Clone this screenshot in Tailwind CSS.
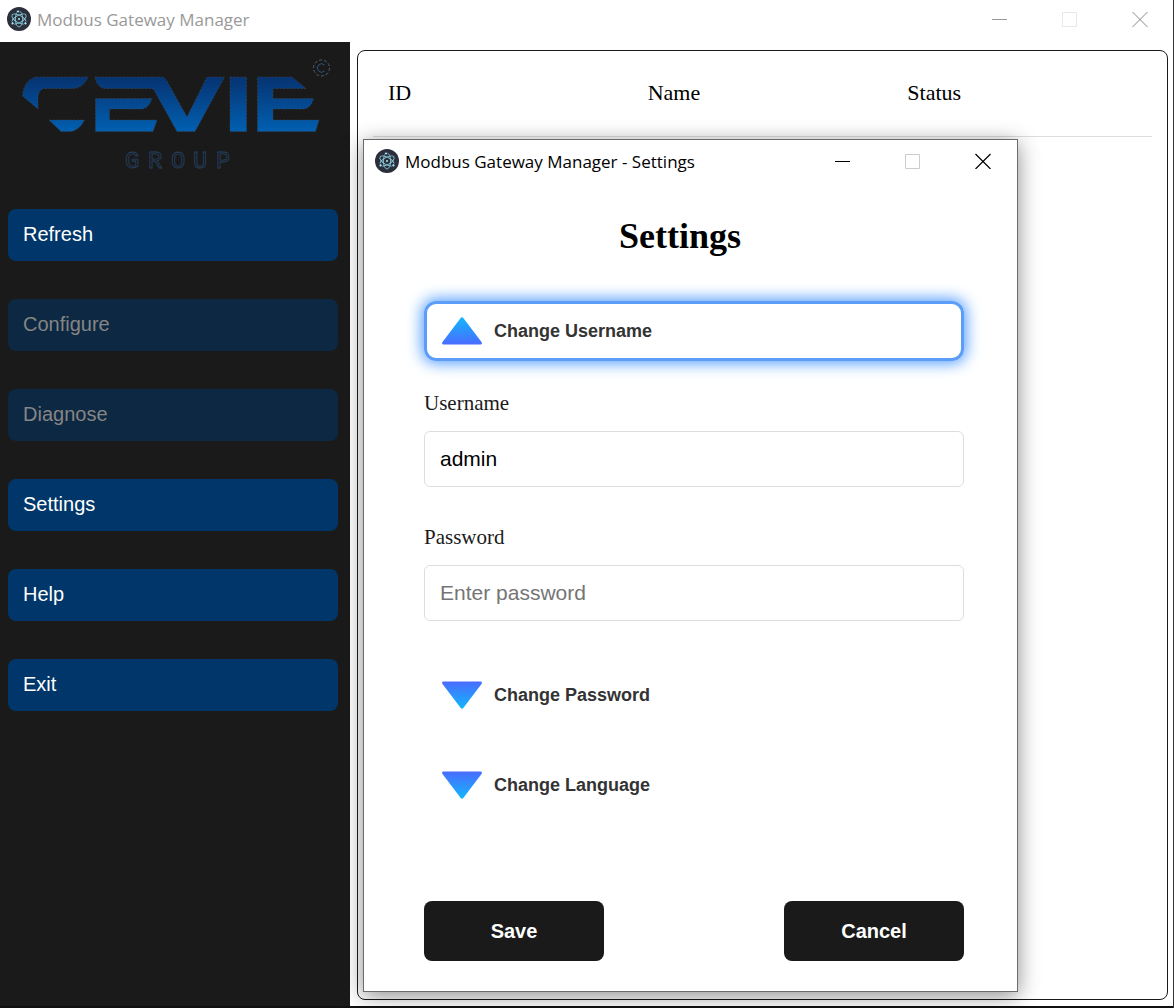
<!DOCTYPE html>
<html lang="en">
<head>
<meta charset="utf-8">
<title>Modbus Gateway Manager</title>
<script src="https://cdn.jsdelivr.net/npm/@tailwindcss/browser@4"></script>
</head>
<body class="relative flex h-screen flex-col overflow-hidden border-r border-[#333] bg-white font-['Liberation_Sans',Arial,sans-serif]">

<!-- Shared symbols -->
<svg class="absolute size-0" aria-hidden="true">
  <defs>
    <linearGradient id="up" x1="0" y1="0" x2="0" y2="1"><stop offset="0" stop-color="#12b6fd"/><stop offset="1" stop-color="#4a6cff"/></linearGradient>
    <symbol id="electron" viewBox="0 0 24 24">
      <circle cx="12" cy="12" r="12" fill="#2b2e3b"/>
      <g fill="none" stroke="#9feaf9" stroke-width="0.9" opacity=".8">
        <ellipse cx="12" cy="12" rx="3.600" ry="8" />
        <ellipse cx="12" cy="12" rx="3.600" ry="8" transform="rotate(60 12 12)"/>
        <ellipse cx="12" cy="12" rx="3.600" ry="8" transform="rotate(-60 12 12)"/>
      </g>
      <g fill="#9feaf9" stroke="#2b2e3b" stroke-width="1"><circle cx="11" cy="4.500" r="1.600"/><circle cx="5.600" cy="16.300" r="1.600"/><circle cx="18.400" cy="16.300" r="1.600"/></g>
      <circle cx="12" cy="12" r="1" fill="#9feaf9"/>
    </symbol>
    <symbol id="arrow-up" viewBox="0 0 40 28">
      <path d="M18.500 1.200Q20-.6 21.500 1.200L39.500 25Q40.700 27.500 38.500 27.500H1.500Q-.7 27.500.5 25Z" fill="url(#up)"/>
    </symbol>
  </defs>
</svg>

<header class="flex h-[42px] shrink-0 items-start justify-between pr-[25px] pl-[7px]">
  <div class="flex h-[38px] items-center gap-[6px]">
    <svg class="size-6"><use href="#electron"/></svg>
    <span class="pt-[2px] font-['Open_Sans',sans-serif] text-[17px] leading-6 text-[#999]">Modbus Gateway Manager</span>
  </div>
  <div class="flex h-[37px] items-center gap-[54px]">
    <button aria-label="Minimize"><svg class="block h-4 w-4" viewBox="0 0 16 16"><path d="M0 8.500H15" stroke="#999"/></svg></button>
    <button aria-label="Maximize" disabled><svg class="block h-4 w-4" viewBox="0 0 16 16"><path d="M.5 1.500h14v14H.5z" fill="none" stroke="#e8e8e8"/></svg></button>
    <button aria-label="Close"><svg class="block h-4 w-4" viewBox="0 0 16 16"><path d="M.5 1l15 15M15.500 1l-15 15" stroke="#888" stroke-width="1"/></svg></button>
  </div>
</header>

<main class="flex min-h-0 flex-1 border-b-2 border-[#111]">
  <aside class="w-[350px] shrink-0 bg-[#1a1a1a]">
    <svg class="block h-[167px] w-[350px]" viewBox="0 42 350 167" role="img" aria-label="Cevie Group">
      <defs><linearGradient id="brand" gradientUnits="userSpaceOnUse" x1="0" y1="77" x2="0" y2="132"><stop offset="0" stop-color="#063371"/><stop offset="1" stop-color="#0160b2"/></linearGradient></defs>
      <g fill="url(#brand)" stroke="#3a4654" stroke-width=".6" stroke-dasharray="2 1.500">
        <path d="M36 77H88Q84 87 74 88.500H44Q38 90 38 98V109L22.500 96Q24 80 36 77Z"/>
        <path d="M49 120H84.500Q79 131 70 131.500H61Z"/>
        <path d="M95 77H163Q166 79 168 83L187 117L207 77H224.500L195 131.500H177L154 90Q153 88.500 151 88.500H104Q96 86 95 77Z"/>
        <path d="M95.500 98.500H152Q149 108 142 109H109.500V120H157L153 131.500H95.500Z"/>
        <path d="M230 77H246.500V131.500H230Z"/>
        <path d="M257.500 77H292L306 88.500H273V98.500H313.500Q311 108 304 109H273V120H319L315.500 131.500H257.500Z"/>
      </g>
      <circle cx="321.500" cy="68" r="8" fill="none" stroke="#59616b" stroke-dasharray="3 2"/>
      <path d="M324.500 65A4.200 4.200 0 1 0 324.500 71" fill="none" stroke="#2b5580"/>
      <text x="125 148 171 193 216" y="168" font-family="Liberation Mono, monospace" font-size="24" fill="#1a1a1a" stroke="#264265" stroke-width=".8">GROUP</text>
    </svg>
    <nav class="flex flex-col gap-[38px] pr-3 pl-2 text-[20px] leading-6 text-white">
      <button class="h-[52px] rounded-lg bg-[#003669] px-[15px] pb-[2px] text-left">Refresh</button>
      <button class="h-[52px] rounded-lg bg-[#0d2842] px-[15px] pb-[2px] text-left text-[#858585]" disabled>Configure</button>
      <button class="h-[52px] rounded-lg bg-[#0d2842] px-[15px] pb-[2px] text-left text-[#858585]" disabled>Diagnose</button>
      <button class="h-[52px] rounded-lg bg-[#003669] px-[15px] pb-[2px] text-left">Settings</button>
      <button class="h-[52px] rounded-lg bg-[#003669] px-[15px] pb-[2px] text-left">Help</button>
      <button class="h-[52px] rounded-lg bg-[#003669] px-[15px] pb-[2px] text-left">Exit</button>
    </nav>
  </aside>

  <section class="mt-2 mr-[5px] mb-[6px] ml-[7px] flex-1 rounded-lg border border-[#1a1a1a] px-[15px]">
    <table class="w-full table-fixed font-['Liberation_Serif',serif] text-[22px] text-black">
      <thead>
        <tr class="h-[85px] border-b border-[#ddd] text-left">
          <th class="px-[15px] pb-[2px] font-normal">ID</th>
          <th class="px-[15px] pb-[2px] font-normal">Name</th>
          <th class="px-[15px] pb-[2px] font-normal">Status</th>
        </tr>
      </thead>
    </table>
  </section>
</main>

<!-- Settings window floating above the main one -->
<div role="dialog" aria-labelledby="dialog-title" class="absolute top-[139px] left-[363px] w-[655px] border border-[#6b6b6b] bg-white shadow-[0_4px_20px_rgba(0,0,0,0.45)]">
  <div class="flex h-[42px] items-center justify-between pr-[26px] pl-[11px]">
    <div class="flex items-center gap-[6px]">
      <svg class="size-6"><use href="#electron"/></svg>
      <span id="dialog-title" class="pt-[2px] font-['Open_Sans',sans-serif] text-[17px] leading-6 text-black">Modbus Gateway Manager - Settings</span>
    </div>
    <div class="flex items-center gap-[54px] pb-px">
      <button aria-label="Minimize"><svg class="block h-4 w-4" viewBox="0 0 16 16"><path d="M0 8.500H15" stroke="#000"/></svg></button>
      <button aria-label="Maximize" disabled><svg class="block h-4 w-4" viewBox="0 0 16 16"><path d="M.5 1.500h14v14H.5z" fill="none" stroke="#ccc"/></svg></button>
      <button aria-label="Close"><svg class="block h-4 w-4" viewBox="0 0 16 16"><path d="M.5 1l15 15M15.500 1l-15 15" stroke="#000" stroke-width="1.200"/></svg></button>
    </div>
  </div>
  <form class="flex flex-col pt-[34px] pr-[53px] pb-[30px] pl-[60px]">
    <h1 class="pr-7 text-center font-['Liberation_Serif',serif] text-[36px] leading-10 font-bold text-black">Settings</h1>
    <button type="button" aria-expanded="true" class="mt-[45px] flex h-[60px] items-center gap-3 rounded-xl border-3 border-[#5b9df9] px-[15px] text-[18px] font-bold text-[#333] shadow-[0_0_15px_2px_#4d9aff]">
      <svg class="h-7 w-10"><use href="#arrow-up"/></svg>Change Username
    </button>
    <label for="username" class="mt-[30px] font-['Liberation_Serif',serif] text-[21px] leading-6 text-[#1a1a1a]">Username</label>
    <input id="username" type="text" value="admin" class="mt-4 h-14 rounded-md border border-[#ddd] px-[15px] text-[21px] text-black">
    <label for="password" class="mt-[38px] font-['Liberation_Serif',serif] text-[21px] leading-6 text-[#1a1a1a]">Password</label>
    <input id="password" type="password" placeholder="Enter password" class="mt-4 h-14 rounded-md border border-[#ddd] px-[15px] text-[21px] text-black placeholder:text-[#757575]">
    <button type="button" aria-expanded="false" class="mt-11 flex h-[60px] items-center gap-3 px-[18px] text-[18px] font-bold text-[#333]">
      <svg class="h-7 w-10 rotate-180"><use href="#arrow-up"/></svg>Change Password
    </button>
    <button type="button" aria-expanded="false" class="mt-[30px] flex h-[60px] items-center gap-3 px-[18px] text-[18px] font-bold text-[#333]">
      <svg class="h-7 w-10 rotate-180"><use href="#arrow-up"/></svg>Change Language
    </button>
    <div class="mt-[86px] flex justify-between text-[20px] font-bold text-white">
      <button type="submit" class="h-[60px] w-[180px] rounded-lg bg-[#1a1a1a]">Save</button>
      <button type="button" class="h-[60px] w-[180px] rounded-lg bg-[#1a1a1a]">Cancel</button>
    </div>
  </form>
</div>
</body>
</html>
